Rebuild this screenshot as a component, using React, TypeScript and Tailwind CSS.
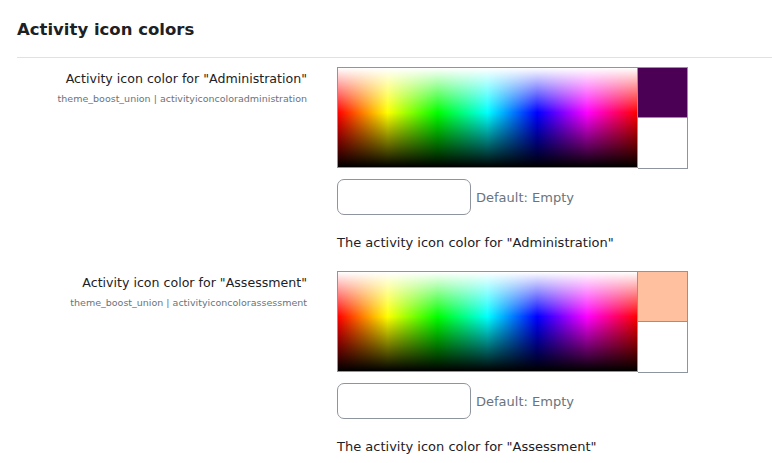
import React from 'react'

const font = { fontFamily: '"DejaVu Sans", Verdana, sans-serif' }

interface Setting {
  label: string
  name: string
  swatch: string
  desc: string
}

const settings: Setting[] = [
  {
    label: 'Activity icon color for "Administration"',
    name: 'activityiconcoloradministration',
    swatch: 'bg-[#4b0055]',
    desc: 'The activity icon color for "Administration"',
  },
  {
    label: 'Activity icon color for "Assessment"',
    name: 'activityiconcolorassessment',
    swatch: 'bg-[#ffc0a0]',
    desc: 'The activity icon color for "Assessment"',
  },
]

function ColourPicker({ swatch }: { swatch: string }) {
  return (
    <div className="flex">
      {/* hue / lightness field */}
      <div className="w-[301px] h-[101px] border border-[#8f959e] bg-[image:linear-gradient(to_bottom,#ffffff_0%,rgba(255,255,255,0)_45%,rgba(0,0,0,0)_45%,#000000_100%),linear-gradient(to_right,#ff0000_0%,#ffff00_16.6%,#00ff00_33.3%,#00ffff_50%,#0000ff_66.6%,#ff00ff_83.3%,#ff0000_100%)]" />
      <div className="flex flex-col">
        <div className={`w-[50px] h-[51px] border border-l-0 border-[#8f959e] ${swatch}`} />
        <div className="w-[50px] h-[51px] border border-l-0 border-t-0 border-[#8f959e] bg-white" />
      </div>
    </div>
  )
}

function SettingRow({ s }: { s: Setting }) {
  return (
    <div className="flex h-[204px]">
      <div className="w-[290px] text-right pt-[2px]">
        <div className="text-[12.6px] leading-[20px] text-[#1d2125]">{s.label}</div>
        <div className="mt-[2px] text-[9.5px] leading-[16px] text-[#6a737b]">
          theme_boost_union | {s.name}
        </div>
      </div>
      <div className="ml-[30px]">
        <ColourPicker swatch={s.swatch} />
        <div className="flex items-center mt-[10px]">
          <div className="w-[134px] h-[36px] rounded-[7px] border border-[#8f959e] bg-white" />
          <span className="ml-[5px] pt-[2px] text-[13px] text-[#6a737b]">Default: Empty</span>
        </div>
        <div className="mt-[18px] text-[13px] leading-[20px] text-[#1d2125]">{s.desc}</div>
      </div>
    </div>
  )
}

export default function App() {
  return (
    <div className="w-[772px] h-[463px] bg-white overflow-hidden pl-[17px]" style={font}>
      <h3 className="pt-[19px] pb-[15px] text-[16.5px] leading-[22px] font-bold text-[#1d2125]">
        Activity icon colors
      </h3>
      <div className="border-t border-[#dee2e6] mt-[1px]" />
      <div className="pt-[9px]">
        {settings.map((s) => (
          <SettingRow key={s.name} s={s} />
        ))}
      </div>
    </div>
  )
}
